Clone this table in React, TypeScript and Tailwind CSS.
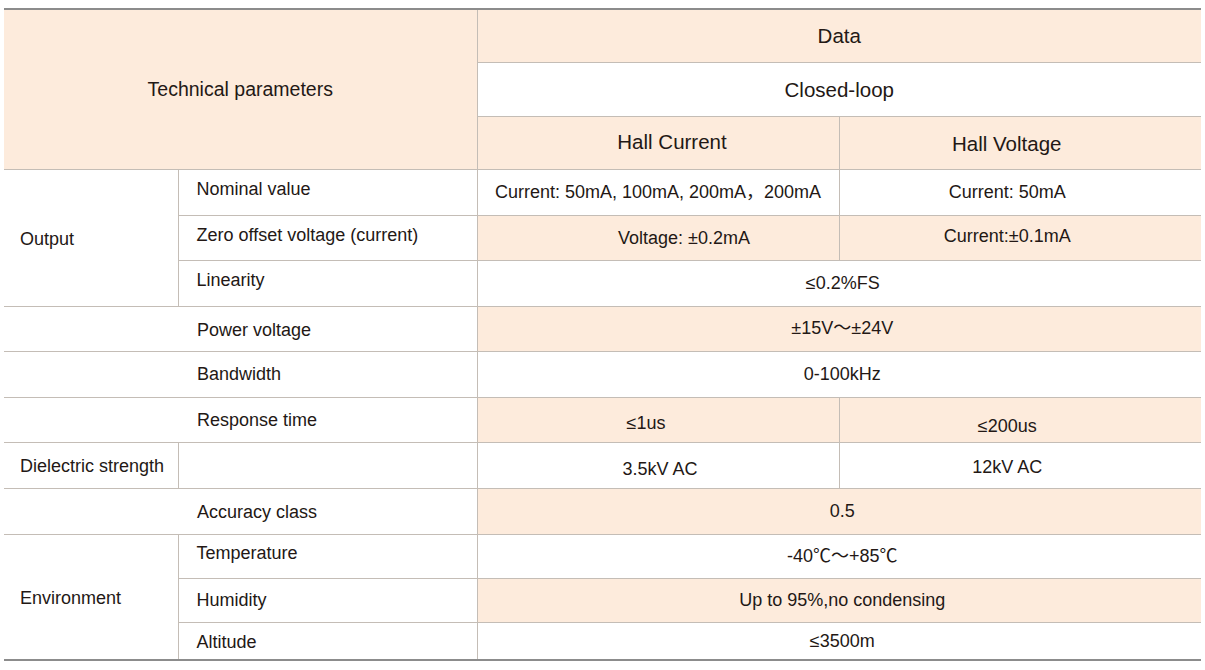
import React from 'react';

const peach = 'bg-[#fdebdc]';
const cell = 'border border-[#c4bdb6] text-center align-middle';

type Row = {
  group?: string;
  groupSpan?: number;
  label: string;
  labelCls?: string;
  wide?: boolean;
  values: string[];
  valueCls?: string[];
  shaded: boolean;
  h: string;
};

const rows: Row[] = [
  { group: 'Output', groupSpan: 3, label: 'Nominal value', labelCls: 'pb-[6px]', values: ['Current: 50mA, 100mA, 200mA，200mA', 'Current: 50mA'], valueCls: ['', 'pr-[26px]'], shaded: false, h: 'h-[46px]' },
  { label: 'Zero offset voltage (current)', labelCls: 'pb-[5px]', values: ['Voltage: ±0.2mA', 'Current:±0.1mA'], valueCls: ['pt-[2px] pl-[52px]', 'pb-[2px] pr-[26px]'], shaded: true, h: 'h-[45px]' },
  { label: 'Linearity', labelCls: 'pb-[6px]', values: ['≤0.2%FS'], valueCls: ['pl-[7px]'], shaded: false, h: 'h-[46px]' },
  { label: 'Power voltage', labelCls: 'pt-[3px]', wide: true, values: ['±15V～±24V'], valueCls: ['pl-[6px]'], shaded: true, h: 'h-[45px]' },
  { label: 'Bandwidth', wide: true, values: ['0-100kHz'], valueCls: ['pl-[6px]'], shaded: false, h: 'h-[46px]' },
  { label: 'Response time', labelCls: 'pt-[2px]', wide: true, values: ['≤1us', '≤200us'], valueCls: ['pt-[7px] pr-[24px]', 'pt-[13px] pr-[26px]'], shaded: true, h: 'h-[45px]' },
  { group: 'Dielectric strength', groupSpan: 1, label: '', values: ['3.5kV AC', '12kV AC'], valueCls: ['pt-[8px] pl-[4px]', 'pt-[4px] pr-[26px]'], shaded: false, h: 'h-[46px]' },
  { label: 'Accuracy class', labelCls: 'pt-[2px]', wide: true, values: ['0.5'], valueCls: ['pl-[6px]'], shaded: true, h: 'h-[46px]' },
  { group: 'Environment', groupSpan: 3, label: 'Temperature', labelCls: 'pb-[6px]', values: ['-40℃～+85℃'], valueCls: ['pl-[6px]'], shaded: false, h: 'h-[44px]' },
  { label: 'Humidity', values: ['Up to 95%,no condensing'], valueCls: ['pl-[6px]'], shaded: true, h: 'h-[44px]' },
  { label: 'Altitude', labelCls: 'pt-[4px]', values: ['≤3500m'], valueCls: ['pt-[2px] pl-[6px]'], shaded: false, h: 'h-[38px]' },
];

export default function App() {
  return (
    <div
      className="w-[1205px] h-[670px] bg-white pt-2 pl-1 text-[#231815]"
      style={{ fontFamily: '"Liberation Sans", Arial, "Noto Sans CJK SC", sans-serif' }}
    >
      <table className="w-[1197px] table-fixed border-collapse border-t-2 border-b-2 border-t-[#8c8c8c] border-b-[#8c8c8c] text-[18px]">
        <colgroup>
          <col className="w-[174px]" />
          <col className="w-[299px]" />
          <col className="w-[362px]" />
          <col className="w-[362px]" />
        </colgroup>
        <thead>
          <tr className="h-[53px]">
            <th rowSpan={3} colSpan={2} className={`${cell} ${peach} border-l-0 border-t-0 font-normal text-[19.5px]`}>
              Technical parameters
            </th>
            <th colSpan={2} className={`${cell} ${peach} border-r-0 border-t-0 font-normal text-[20.5px] pt-[2px]`}>Data</th>
          </tr>
          <tr className="h-[54px]">
            <th colSpan={2} className={`${cell} border-r-0 bg-white font-normal text-[20.5px] pt-[2px]`}>Closed-loop</th>
          </tr>
          <tr className="h-[53px]">
            <th className={`${cell} ${peach} font-normal text-[20.5px] pl-[28px]`}>Hall Current</th>
            <th className={`${cell} ${peach} border-r-0 font-normal text-[20.5px] pt-1 pr-[27px]`}>Hall Voltage</th>
          </tr>
        </thead>
        <tbody>
          {rows.map((r, i) => (
            <tr key={i} className={r.h}>
              {r.wide ? (
                <td colSpan={2} className={`${cell} border-l-0 text-left pl-[193px] ${r.labelCls ?? ''}`}>{r.label}</td>
              ) : (
                <>
                  {r.group && (
                    <td rowSpan={r.groupSpan} className={`${cell} border-l-0 text-left pl-4 pt-[3px]`}>{r.group}</td>
                  )}
                  <td className={`${cell} text-left pl-[18px] ${r.labelCls ?? ''}`}>{r.label}</td>
                </>
              )}
              {r.values.length === 1 ? (
                <td colSpan={2} className={`${cell} border-r-0 ${r.shaded ? peach : ''} ${r.valueCls?.[0] ?? ''}`}>{r.values[0]}</td>
              ) : (
                r.values.map((v, j) => (
                  <td key={j} className={`${cell} ${j === 1 ? 'border-r-0' : ''} ${r.shaded ? peach : ''} ${r.valueCls?.[j] ?? ''}`}>{v}</td>
                ))
              )}
            </tr>
          ))}
        </tbody>
      </table>
    </div>
  );
}
